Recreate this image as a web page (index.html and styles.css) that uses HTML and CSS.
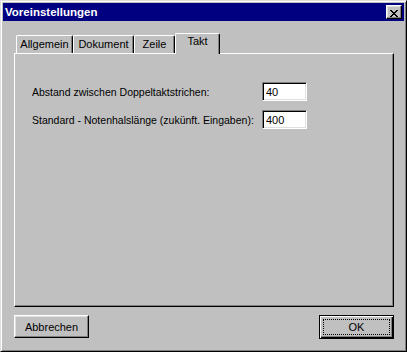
FILE: index.html
```html
<!DOCTYPE html>
<html lang="de">
<head>
    <meta charset="UTF-8">
    <title>Voreinstellungen</title>
    <link rel="stylesheet" href="styles.css">
</head>
<body>
    <div class="dialog">
        <div class="titlebar">
            <span class="title">Voreinstellungen</span>
            <button class="close-btn" aria-label="Schließen">
                <svg width="8" height="7" viewBox="0 0 8 7" shape-rendering="crispEdges">
                    <rect x="0" y="0" width="2" height="1"/><rect x="6" y="0" width="2" height="1"/>
                    <rect x="1" y="1" width="2" height="1"/><rect x="5" y="1" width="2" height="1"/>
                    <rect x="2" y="2" width="4" height="1"/>
                    <rect x="3" y="3" width="2" height="1"/>
                    <rect x="2" y="4" width="4" height="1"/>
                    <rect x="1" y="5" width="2" height="1"/><rect x="5" y="5" width="2" height="1"/>
                    <rect x="0" y="6" width="2" height="1"/><rect x="6" y="6" width="2" height="1"/>
                </svg>
            </button>
        </div>
        <div class="dialog-body">
            <div class="tabs">
                <div class="tab tab-allgemein">Allgemein</div>
                <div class="tab tab-dokument">Dokument</div>
                <div class="tab tab-zeile">Zeile</div>
                <div class="tab tab-takt active">Takt</div>
            </div>
            <div class="tab-panel">
                <label for="abstand">Abstand zwischen Doppeltaktstrichen:</label>
                <input type="text" id="abstand" value="40">
                <label for="notenhals">Standard - Notenhalslänge (zukünft. Eingaben):</label>
                <input type="text" id="notenhals" value="400">
            </div>
            <div class="buttons">
                <button class="btn">Abbrechen</button>
                <button class="btn default">OK</button>
            </div>
        </div>
    </div>
</body>
</html>
```

FILE: styles.css
```css
* {
    margin: 0;
    padding: 0;
    box-sizing: border-box;
}

body {
    font-family: "Liberation Sans", Arial, sans-serif;
    font-size: 10.5px;
    color: #000;
    background: #c0c0c0;
}

.dialog {
    width: 407px;
    height: 352px;
    display: flex;
    flex-direction: column;
    padding: 2px;
    background: #c0c0c0;
    border: 1px solid;
    border-color: #dfdfdf #000 #000 #dfdfdf;
    box-shadow: inset 1px 1px #fff, inset -1px -1px #808080;
}

.titlebar {
    height: 18px;
    display: flex;
    align-items: center;
    justify-content: space-between;
    padding: 0 2px;
    background: #000080;
    color: #fff;
}

.title {
    font-weight: bold;
    font-size: 11.5px;
}

.close-btn {
    display: block;
    width: 16px;
    height: 14px;
    padding: 2px 0 0 3px;
    background: #c0c0c0;
    border: 1px solid;
    border-color: #fff #000 #000 #fff;
    box-shadow: inset -1px -1px #808080, inset 1px 1px #dfdfdf;
}

.close-btn svg {
    display: block;
    fill: #000;
}

.dialog-body {
    flex: 1;
    display: flex;
    flex-direction: column;
    padding: 12px 10px 0 11px;
}

.tabs {
    display: flex;
    align-items: flex-end;
    height: 20px;
    padding-left: 2px;
}

.tab {
    height: 18px;
    line-height: 17px;
    font-size: 11px;
    text-align: center;
    border: 1px solid;
    border-bottom: none;
    border-color: #fff #000 #000 #fff;
    border-radius: 2px 2px 0 0;
    box-shadow: inset -1px 0 #808080;
}

.tab-allgemein { width: 57px; }
.tab-dokument { width: 61px; }
.tab-zeile { width: 41px; }
.tab-takt { width: 45px; }

.tab.active {
    position: relative;
    z-index: 1;
    height: 21px;
    line-height: 15px;
    margin-bottom: -1px;
    background: #c0c0c0;
}

.tab-panel {
    height: 254px;
    display: grid;
    grid-template-columns: 230px 45px;
    align-content: start;
    align-items: center;
    row-gap: 9px;
    padding: 28px 0 0 17px;
    border: 1px solid;
    border-color: #fff #000 #000 #fff;
    box-shadow: inset -1px -1px #808080;
}

.tab-panel label {
    white-space: nowrap;
}

.tab-panel input {
    width: 45px;
    height: 19px;
    padding: 0 3px;
    font: inherit;
    font-size: 11px;
    color: #000;
    background: #fff;
    border: 1px solid;
    border-color: #808080 #fff #fff #808080;
    box-shadow: inset 1px 1px #000, inset -1px -1px #dfdfdf;
    outline: none;
}

.buttons {
    display: flex;
    justify-content: space-between;
    align-items: flex-start;
    margin-top: 8px;
}

.btn {
    width: 75px;
    height: 23px;
    font: inherit;
    font-size: 11px;
    color: #000;
    background: #c0c0c0;
    border: 1px solid;
    border-color: #fff #000 #000 #fff;
    box-shadow: inset -1px -1px #808080, inset 1px 1px #dfdfdf;
}

.btn.default {
    height: 24px;
    border-color: #000;
    box-shadow: inset 1px 1px #fff, inset -1px -1px #000, inset -2px -2px #808080;
    outline: 1px dotted #000;
    outline-offset: -5px;
}
```
